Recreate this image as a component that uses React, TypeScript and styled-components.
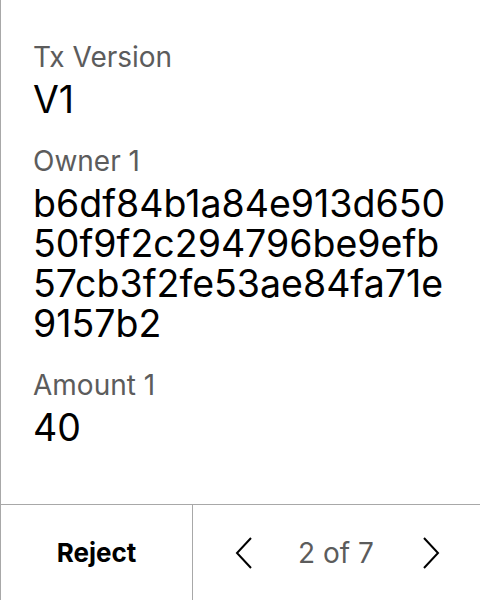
import React from "react";
import styled, { createGlobalStyle } from "styled-components";

const Global = createGlobalStyle`
  html, body { margin: 0; padding: 0; background: #fff; }
  body { font-family: Inter, "Noto Sans", sans-serif; }
  * { box-sizing: border-box; }
`;

const Screen = styled.div`
  width: 480px;
  height: 600px;
  display: flex;
  flex-direction: column;
  border-left: 1px solid #a8a8a8;
  background: #fff;
`;

const Content = styled.div`
  flex: 1;
  padding: 40px 32px 0 32px;
  display: flex;
  flex-direction: column;
  gap: 24px;
`;

const Field = styled.div`
  display: flex;
  flex-direction: column;
  gap: 6px;
`;

const Label = styled.div`
  font-size: 28px;
  line-height: 34px;
  color: #5c5c5c;
`;

const Value = styled.div`
  font-size: 37.5px;
  line-height: 40px;
  color: #000;
  word-break: break-all;
`;

const Footer = styled.div`
  height: 96px;
  border-top: 1px solid #a8a8a8;
  display: grid;
  grid-template-columns: 192px 1fr;
`;

const RejectButton = styled.button`
  border: none;
  border-right: 1px solid #a8a8a8;
  background: transparent;
  font-family: inherit;
  font-size: 26px;
  font-weight: 700;
  color: #000;
  padding: 0;
`;

const Pager = styled.div`
  display: flex;
  align-items: center;
  justify-content: space-between;
  padding: 0 40px 0 42px;
`;

const NavButton = styled.button`
  border: none;
  background: transparent;
  padding: 0;
  display: flex;
  width: 18px;
  height: 34px;
`;

const PageText = styled.span`
  font-size: 28px;
  color: #5c5c5c;
  margin-left: -3px;
`;

const Chevron = ({ dir }: { dir: "left" | "right" }) => (
  <svg width="18" height="34" viewBox="0 0 18 34" fill="none">
    <path
      d={dir === "left" ? "M16 2 L2 17 L16 32" : "M2 2 L16 17 L2 32"}
      stroke="#000"
      strokeWidth="2"
    />
  </svg>
);

export default function App() {
  return (
    <>
      <Global />
      <Screen>
        <Content>
          <Field>
            <Label>Tx Version</Label>
            <Value>V1</Value>
          </Field>
          <Field>
            <Label>Owner 1</Label>
            <Value>b6df84b1a84e913d65050f9f2c294796be9efb57cb3f2fe53ae84fa71e9157b2</Value>
          </Field>
          <Field>
            <Label>Amount 1</Label>
            <Value>40</Value>
          </Field>
        </Content>
        <Footer>
          <RejectButton>Reject</RejectButton>
          <Pager>
            <NavButton aria-label="Previous"><Chevron dir="left" /></NavButton>
            <PageText>2 of 7</PageText>
            <NavButton aria-label="Next"><Chevron dir="right" /></NavButton>
          </Pager>
        </Footer>
      </Screen>
    </>
  );
}
